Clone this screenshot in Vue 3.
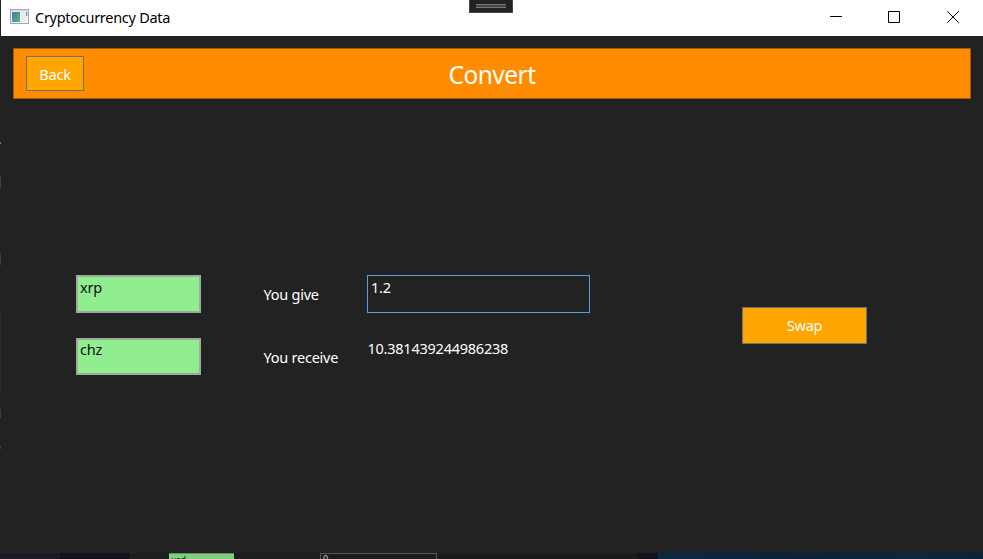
<script setup>
import { ref } from 'vue'

const from = ref('xrp')
const to = ref('chz')
const amount = ref('1.2')
const result = ref('10.381439244986238')
</script>

<template>
  <div class="screen">
    <div class="edge"><i class="e1"></i><i class="e2"></i><i class="e3"></i><i class="e4"></i><i class="e5"></i><i class="e6"></i></div>
    <div class="window">
      <div class="titlebar">
        <svg class="app-icon" width="20" height="16" viewBox="0 0 20 16">
          <defs>
            <linearGradient id="tile" x1="0" y1="0" x2="1" y2="1">
              <stop offset="0" stop-color="#4478a8" />
              <stop offset="1" stop-color="#62b580" />
            </linearGradient>
          </defs>
          <rect x="0.5" y="0.5" width="18" height="14" fill="#f3f5f6" stroke="#a3a9b2" />
          <rect x="1" y="1" width="17" height="1.5" fill="#d5d9df" />
          <rect x="2" y="3" width="8" height="10" fill="url(#tile)" />
          <rect x="11" y="3" width="5" height="10" fill="#e7ebec" />
          <rect x="16" y="3" width="1.3" height="4" fill="#6ba18b" />
        </svg>
        <span class="title">Cryptocurrency Data</span>
        <div class="controls">
          <svg width="12" height="12" viewBox="0 0 12 12"><path d="M0 4.5H12" /></svg>
          <svg width="12" height="12" viewBox="0 0 12 12"><path d="M.5 .5H11.5V11.5H.5Z" /></svg>
          <svg width="12" height="12" viewBox="0 0 12 12"><path d="M.3 .3L11.7 11.7M11.7 .3L.3 11.7" /></svg>
        </div>
        <div class="handle"><div class="grip"></div></div>
      </div>

      <div class="content">
        <header class="header">
          <button class="back">Back</button>
          <h1>Convert</h1>
        </header>

        <main class="form">
          <div class="coins">
            <div class="coin">{{ from }}</div>
            <div class="coin second">{{ to }}</div>
          </div>
          <div class="labels">
            <span>You give</span>
            <span>You receive</span>
          </div>
          <div class="values">
            <div class="amount">{{ amount }}</div>
            <div class="result">{{ result }}</div>
          </div>
          <button class="swap">Swap</button>
        </main>
      </div>
    </div>
    <div class="behind">
      <div class="b1"></div><div class="b2"></div><div class="b3"></div>
      <div class="b-green">usd</div><div class="b4"></div>
      <div class="b-input">0</div><div class="b5"></div>
      <div class="b6"></div><div class="b7"></div>
    </div>
  </div>
</template>

<style>
body {
  background: #222;
}
</style>

<style scoped>
.screen {
  display: grid;
  grid-template: 553px 6px / 1px 982px;
  width: 983px;
  height: 559px;
  overflow: hidden;
  background: #222;
  color: #fff;
  font: 14.5px/18px "Noto Sans", "Open Sans", sans-serif;
  letter-spacing: -0.24px;
}
.edge {
  display: flex;
  flex-direction: column;
  padding-top: 142px;
  background: #222;
}
.edge i {
  flex: none;
  background: #3b3e4c;
}
.edge .e1 { height: 2px; background: #777; }
.e2 { height: 12px; margin-top: 32px; }
.e3 { height: 12px; margin-top: 65px; }
.edge .e4 { height: 78px; margin-top: 48px; background: #2a2938; }
.e5 { height: 9px; margin-top: 18px; }
.e6 { height: 3px; margin-top: 28px; }
.window {
  display: flex;
  flex-direction: column;
}
.titlebar {
  position: relative;
  flex: none;
  display: flex;
  align-items: flex-start;
  height: 36px;
  background: #fff;
  color: #000;
}
.app-icon {
  margin: 9px 0 0 9px;
}
.title {
  margin: 8px 0 0 5px;
  letter-spacing: -0.28px;
}
.controls {
  display: flex;
  gap: 46px;
  margin: 11px 24px 0 auto;
}
.controls svg {
  fill: none;
  stroke: #000;
  stroke-width: 1;
}
.controls svg:first-child {
  margin-top: 1px;
}
.controls svg:last-child {
  margin-left: 1px;
}
.handle {
  position: absolute;
  top: 0;
  left: 468px;
  box-sizing: border-box;
  width: 44px;
  height: 13px;
  padding: 4px 6px;
  border: 1px solid #484848;
  border-top: 0;
  background: #222;
}
.grip {
  box-sizing: border-box;
  height: 4px;
  border-top: 1px solid #777;
  border-bottom: 1px solid #777;
  background: #444;
}
.content {
  flex: 1;
  padding: 12px 12px 0;
}
.header {
  box-sizing: border-box;
  display: grid;
  grid-template-columns: 58px 1fr 58px;
  align-items: center;
  height: 51px;
  padding: 0 12px;
  border: 1px solid #9b5b0c;
  background: #ff8c00;
}
button {
  box-sizing: border-box;
  padding: 0;
  border: 1px solid #707070;
  background: #ffa500;
  color: #fff;
  font: inherit;
  letter-spacing: inherit;
}
.back {
  height: 35px;
}
h1 {
  margin: 0;
  padding-top: 2px;
  text-align: center;
  font-size: 24.5px;
  font-weight: 400;
  line-height: 32px;
  letter-spacing: -0.5px;
}
.form {
  display: flex;
  align-items: flex-start;
  padding: 176px 0 0 63px;
}
.coins {
  width: 125px;
}
.coin {
  box-sizing: border-box;
  height: 38px;
  padding: 1px 2px;
  border: 2px solid #9faa9f;
  background: #90ee90;
  color: #111;
}
.coin.second {
  height: 37px;
  margin-top: 25px;
  padding-top: 0;
}
.labels {
  display: flex;
  flex-direction: column;
  gap: 45px;
  width: 103.5px;
  margin: 10px 0 0 62.5px;
}
.values {
  width: 223px;
}
.amount {
  box-sizing: border-box;
  height: 38px;
  padding: 2px 3px;
  border: 1px solid #569de5;
}
.result {
  margin-top: 26px;
  padding-left: 0.5px;
}
.swap {
  width: 125px;
  height: 37px;
  margin: 32px 0 0 152px;
  padding-bottom: 2px;
}
.behind {
  grid-column: 1 / 3;
  display: flex;
  overflow: hidden;
  font-size: 9px;
  line-height: 9px;
}
.behind > div {
  box-sizing: border-box;
  flex: none;
}
.b1 { width: 60px; background: #1b1924; }
.b2 { width: 70px; background: #13111b; }
.b3 { width: 39px; background: #1e1e1e; }
.b-green {
  width: 65px;
  padding: 1px 0 0 2px;
  border-top: 1px solid #6b8b6b;
  background: #7bd07b;
  color: #142014;
}
.b4 { width: 86px; background: #1e1e1e; }
.b-input {
  width: 117px;
  padding-left: 2px;
  border: 1px solid #555;
  border-bottom: 0;
  background: #1c1c1c;
  color: #ccc;
}
.b5 { width: 201px; background: #1c1c1c; }
.b6 { width: 20px; background: #15111c; }
.b7 { width: 325px; background: linear-gradient(90deg, #0b2944, #0b203b 45%, #0b2a3b 80%, #0a2238); }
</style>
